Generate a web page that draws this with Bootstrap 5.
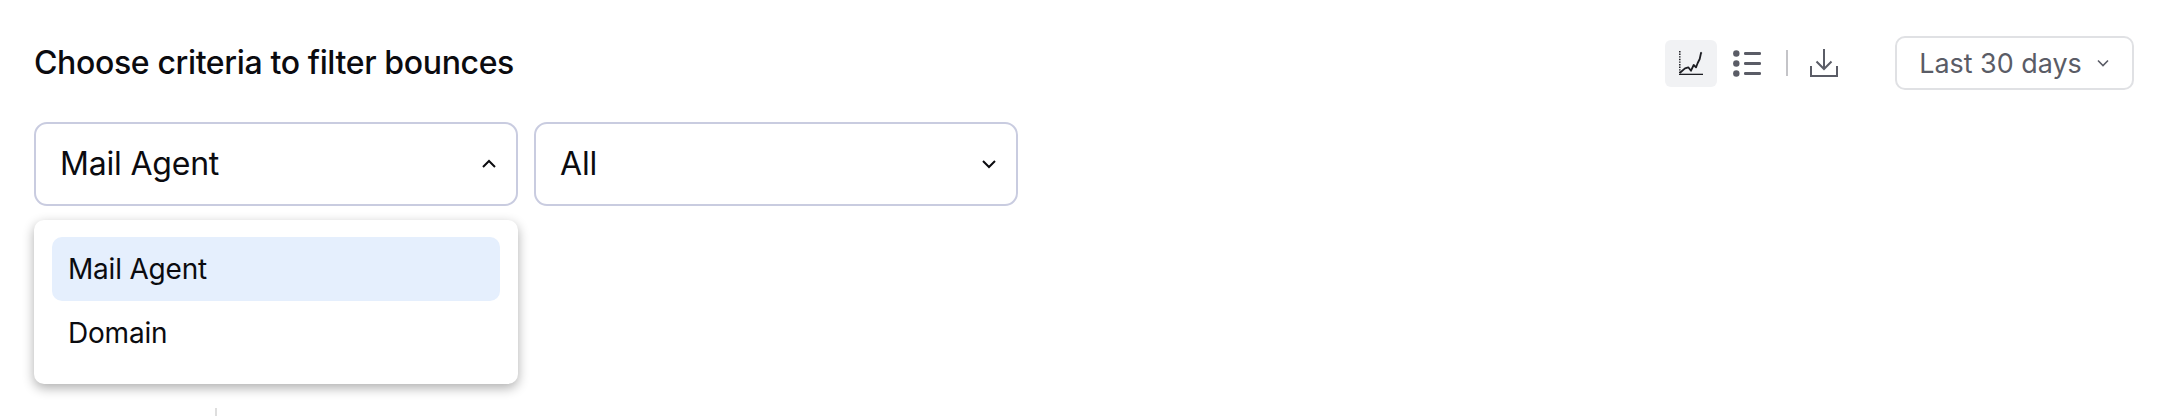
<!DOCTYPE html>
<html lang="en">
<head>
    <meta charset="UTF-8">
    <title>Bounces</title>
    <link href="https://cdn.jsdelivr.net/npm/bootstrap@5.3.0/dist/css/bootstrap.min.css" rel="stylesheet">
    <style>
        body {
            background-color: #fff;
            font-family: Inter, "Liberation Sans", sans-serif;
            height: 416px;
            overflow: hidden;
        }
        .page-wrap {
            padding: 36px 30px 0 34px;
        }
        .head-row {
            height: 54px;
        }
        .filter-title {
            font-size: 32px;
            font-weight: 500;
            color: #0b0b0f;
            margin: 0;
            letter-spacing: -0.36px;
        }
        .view-btn {
            width: 52px;
            height: 47px;
            border-radius: 6px;
        }
        .view-btn.on {
            background-color: #f1f2f4;
            margin-right: 4px;
        }
        .tool-sep {
            width: 2px;
            height: 26px;
            background-color: #c4c4c8;
            margin: 0 21px 0 13px;
        }
        .date-btn {
            width: 239px;
            height: 54px;
            margin-left: 56px;
            border: 2px solid #e0e1e4;
            border-radius: 10px;
            background: #fff;
            color: #5a5c66;
            font-size: 26.9px;
            gap: 14px;
        }
        .filter-row {
            margin-top: 32px;
            gap: 16px;
        }
        .pick-wrap {
            width: 484px;
        }
        .pick-box {
            height: 84px;
            padding: 0 19px 0 24px;
            border: 2px solid #c9cce0;
            border-radius: 13px;
            background: #fff;
            color: #0b0b0f;
            font-size: 32px;
            letter-spacing: -0.2px;
            width: 100%;
        }
        .pick-menu {
            display: block;
            top: 98px;
            left: 0;
            width: 484px;
            height: 164px;
            padding: 17px 18px;
            border: 0;
            border-radius: 10px;
            box-shadow: 0 4px 12px rgba(0, 0, 0, 0.32);
        }
        .pick-item {
            height: 64px;
            padding: 0 16px;
            border-radius: 10px;
            font-size: 28px;
            letter-spacing: -0.2px;
            color: #0b0b0f;
        }
        .pick-item.active,
        .pick-item:active {
            background-color: #e5effd;
            color: #0b0b0f;
        }
        .axis-stub {
            top: 408px;
            left: 215px;
            width: 2px;
            height: 8px;
            background-color: #dedede;
        }
    </style>
</head>
<body>
    <div class="page-wrap position-relative">
        <div class="head-row d-flex justify-content-between align-items-center">
            <h1 class="filter-title">Choose criteria to filter bounces</h1>
            <div class="d-flex align-items-center">
                <div class="view-btn on d-flex align-items-center justify-content-center">
                    <svg width="24" height="24" viewBox="0 0 24 24" fill="none" stroke="#1c1d22">
                        <path d="M.8 0v22" stroke-width="1.5" stroke-dasharray="1.4 1.2"/>
                        <path d="M0 23.5h24" stroke-width="1.6"/>
                        <path d="M.7 22 6 17.300l3.300-1 2.700 3.400 2.700-5.700 2.300 2.300 1.700-4.300 2-4 1.300-6 .7-.7" stroke-width="1.800" stroke-linejoin="round"/>
                    </svg>
                </div>
                <div class="view-btn d-flex align-items-center justify-content-center">
                    <svg width="28" height="27" viewBox="0 0 28 27" fill="#5a5c66">
                        <circle cx="3.300" cy="3.500" r="3.200"/>
                        <circle cx="3.300" cy="13.500" r="3.200"/>
                        <circle cx="3.300" cy="23.500" r="3.200"/>
                        <rect x="11" y="2" width="17" height="3" rx="1.300"/>
                        <rect x="11" y="12" width="17" height="3" rx="1.300"/>
                        <rect x="11" y="22" width="17" height="3" rx="1.300"/>
                    </svg>
                </div>
                <div class="tool-sep"></div>
                <svg width="30" height="30" viewBox="0 0 30 30" fill="none" stroke="#5a5c66" stroke-width="2">
                    <path d="M2 18v10h26V18"/>
                    <path d="M15 1v20M7.500 13.500 15 21l7.500-7.500"/>
                </svg>
                <button type="button" class="date-btn d-flex align-items-center justify-content-center">
                    Last 30 days
                    <svg width="14" height="10" viewBox="0 0 14 10" fill="none" stroke="#5a5c66" stroke-width="1.6"><path d="M2 2.500l5 5 5-5"/></svg>
                </button>
            </div>
        </div>
        <div class="filter-row d-flex">
            <div class="pick-wrap position-relative">
                <button type="button" class="pick-box d-flex align-items-center justify-content-between">
                    Mail Agent
                    <svg width="16" height="10" viewBox="0 0 16 10" fill="none" stroke="#0b0b0f" stroke-width="2"><path d="M2 8l6-6 6 6"/></svg>
                </button>
                <div class="dropdown-menu pick-menu position-absolute">
                    <a class="dropdown-item pick-item active d-flex align-items-center" href="#">Mail Agent</a>
                    <a class="dropdown-item pick-item d-flex align-items-center" href="#">Domain</a>
                </div>
            </div>
            <div class="pick-wrap">
                <button type="button" class="pick-box d-flex align-items-center justify-content-between">
                    All
                    <svg width="16" height="10" viewBox="0 0 16 10" fill="none" stroke="#0b0b0f" stroke-width="2"><path d="M2 2l6 6 6-6"/></svg>
                </button>
            </div>
        </div>
    </div>
    <div class="axis-stub position-absolute"></div>
    <script src="https://cdn.jsdelivr.net/npm/bootstrap@5.3.0/dist/js/bootstrap.bundle.min.js"></script>
</body>
</html>
